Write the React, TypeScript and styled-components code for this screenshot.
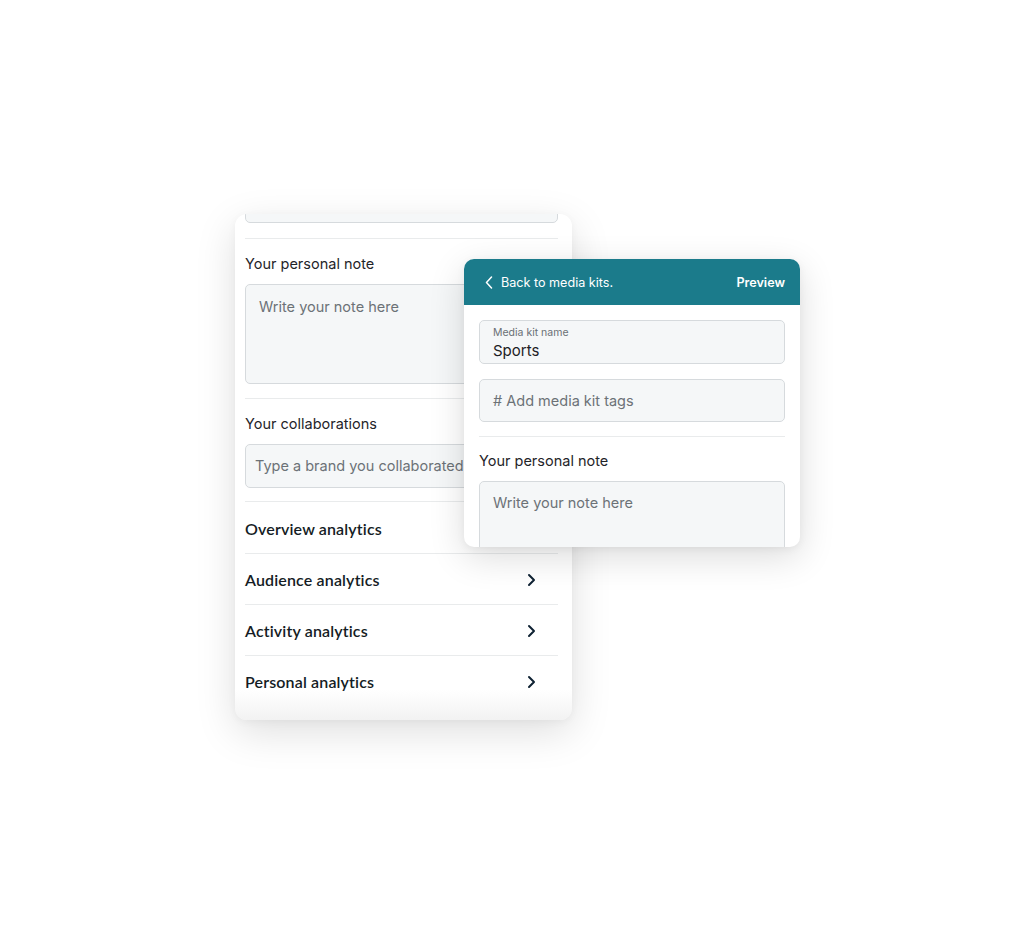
import React from "react";
import styled, { createGlobalStyle } from "styled-components";

const Global = createGlobalStyle`
  html, body { margin: 0; padding: 0; background: #ffffff; }
  body { font-family: Inter, "Noto Sans", sans-serif; -webkit-font-smoothing: antialiased; }
  * { box-sizing: border-box; }
`;

const Stage = styled.div`
  position: relative;
  width: 1016px;
  height: 930px;
  padding: 214px 0 0 235px;
  background: #ffffff;
  overflow: hidden;
`;

const BackCard = styled.div`
  position: relative;
  width: 337px;
  height: 506px;
  background: #ffffff;
  border-radius: 12px;
  overflow: hidden;
  box-shadow: 0 12px 40px rgba(0, 0, 0, 0.13), 0 2px 8px rgba(0, 0, 0, 0.04);
  padding: 0 14px 0 10px;
  display: flex;
  flex-direction: column;
  &::after {
    content: "";
    position: absolute;
    left: 0;
    right: 0;
    bottom: 0;
    height: 30px;
    background: linear-gradient(to bottom, rgba(240, 240, 240, 0), rgba(238, 238, 238, 0.75));
    pointer-events: none;
  }
`;

const FrontCard = styled.div`
  position: absolute;
  left: 464px;
  top: 259px;
  width: 336px;
  height: 288px;
  background: #ffffff;
  border-radius: 10px;
  overflow: hidden;
  box-shadow: 0 10px 36px rgba(0, 0, 0, 0.14), 0 2px 8px rgba(0, 0, 0, 0.05);
  display: flex;
  flex-direction: column;
`;

const Header = styled.div`
  flex: none;
  height: 46px;
  background: #1b7b8b;
  display: flex;
  align-items: center;
  justify-content: space-between;
  padding: 0 15px 0 21px;
  color: #ffffff;
  font-size: 12.6px;
`;

const BackLink = styled.div`
  display: flex;
  align-items: center;
  gap: 8px;
  font-weight: 400;
`;

const Preview = styled.div`
  font-weight: 600;
`;

const FrontBody = styled.div`
  padding: 15px 15px 0 15px;
  display: flex;
  flex-direction: column;
`;

const Field = styled.div<{ $h: number; $pt?: number; $mt?: number }>`
  flex: none;
  height: ${(p) => p.$h}px;
  margin-top: ${(p) => p.$mt ?? 0}px;
  padding: ${(p) => p.$pt ?? 0}px 13px 0 13px;
  background: #f5f7f8;
  border: 1px solid #d6dadd;
  border-radius: 5px;
  display: flex;
  flex-direction: column;
`;

const InlineField = styled(Field)`
  justify-content: center;
  padding-top: 0;
`;

const FloatLabel = styled.div`
  font-size: 10.5px;
  color: #6a7075;
  line-height: 13px;
`;

const Value = styled.div`
  font-size: 15px;
  color: #1d2125;
  line-height: 20px;
  margin-top: 2px;
`;

const Placeholder = styled.div<{ $size?: number }>`
  font-size: ${(p) => p.$size ?? 14.5}px;
  color: #6c7277;
  line-height: 20px;
  white-space: nowrap;
`;

const Divider = styled.div<{ $mt: number }>`
  flex: none;
  height: 1px;
  background: #e9ebec;
  margin-top: ${(p) => p.$mt}px;
`;

const Label = styled.div<{ $size?: number; $mt: number }>`
  font-size: ${(p) => p.$size ?? 14.5}px;
  color: #1f2429;
  line-height: 20px;
  margin-top: ${(p) => p.$mt}px;
`;

const Row = styled.div<{ $first?: boolean }>`
  flex: none;
  height: 51px;
  border-top: ${(p) => (p.$first ? "none" : "1px solid #e9ebec")};
  display: flex;
  align-items: center;
  justify-content: space-between;
  padding: 1px 22px 0 0;
  font-family: Lato, "Open Sans", sans-serif;
  font-size: 16px;
  color: #141c24;
  letter-spacing: 0.15px;
`;

const RowText = styled.span`
  font-weight: 600;
`;

const Chevron = () => (
  <svg width="10" height="14" viewBox="0 0 10 14" fill="none">
    <path d="M3 2 L8 7 L3 12" stroke="#0f2233" strokeWidth="2" strokeLinecap="round" strokeLinejoin="round" />
  </svg>
);

const BackChevron = () => (
  <svg width="8" height="13" viewBox="0 0 8 13" fill="none">
    <path d="M6.5 1 L1.5 6.5 L6.5 12" stroke="#ffffff" strokeWidth="1.5" strokeLinecap="round" strokeLinejoin="round" />
  </svg>
);

const rows = [
  { label: "Overview analytics", chevron: false },
  { label: "Audience analytics", chevron: true },
  { label: "Activity analytics", chevron: true },
  { label: "Personal analytics", chevron: true },
];

export default function App() {
  return (
    <>
      <Global />
      <Stage>
        <BackCard>
          <Field $h={44} $mt={-35} />
          <Divider $mt={15} />
          <Label $mt={15}>Your personal note</Label>
          <Field $h={100} $mt={10} $pt={12}>
            <Placeholder>Write your note here</Placeholder>
          </Field>
          <Divider $mt={14} />
          <Label $mt={15}>Your collaborations</Label>
          <InlineField $h={44} $mt={10} style={{ paddingLeft: 9 }}>
            <Placeholder>Type a brand you collaborated with</Placeholder>
          </InlineField>
          <Divider $mt={13} />
          {rows.map((r, i) => (
            <Row key={r.label} $first={i === 0}>
              <RowText>{r.label}</RowText>
              {r.chevron && <Chevron />}
            </Row>
          ))}
        </BackCard>
        <FrontCard>
          <Header>
            <BackLink>
              <BackChevron />
              <span>Back to media kits.</span>
            </BackLink>
            <Preview>Preview</Preview>
          </Header>
          <FrontBody>
            <Field $h={44} $pt={5}>
              <FloatLabel>Media kit name</FloatLabel>
              <Value>Sports</Value>
            </Field>
            <InlineField $h={43} $mt={15}>
              <Placeholder>
                # Add media kit tags
              </Placeholder>
            </InlineField>
            <Divider $mt={14} />
            <Label $mt={14}>
              Your personal note
            </Label>
            <Field $h={90} $mt={10} $pt={11}>
              <Placeholder>Write your note here</Placeholder>
            </Field>
          </FrontBody>
        </FrontCard>
      </Stage>
    </>
  );
}
